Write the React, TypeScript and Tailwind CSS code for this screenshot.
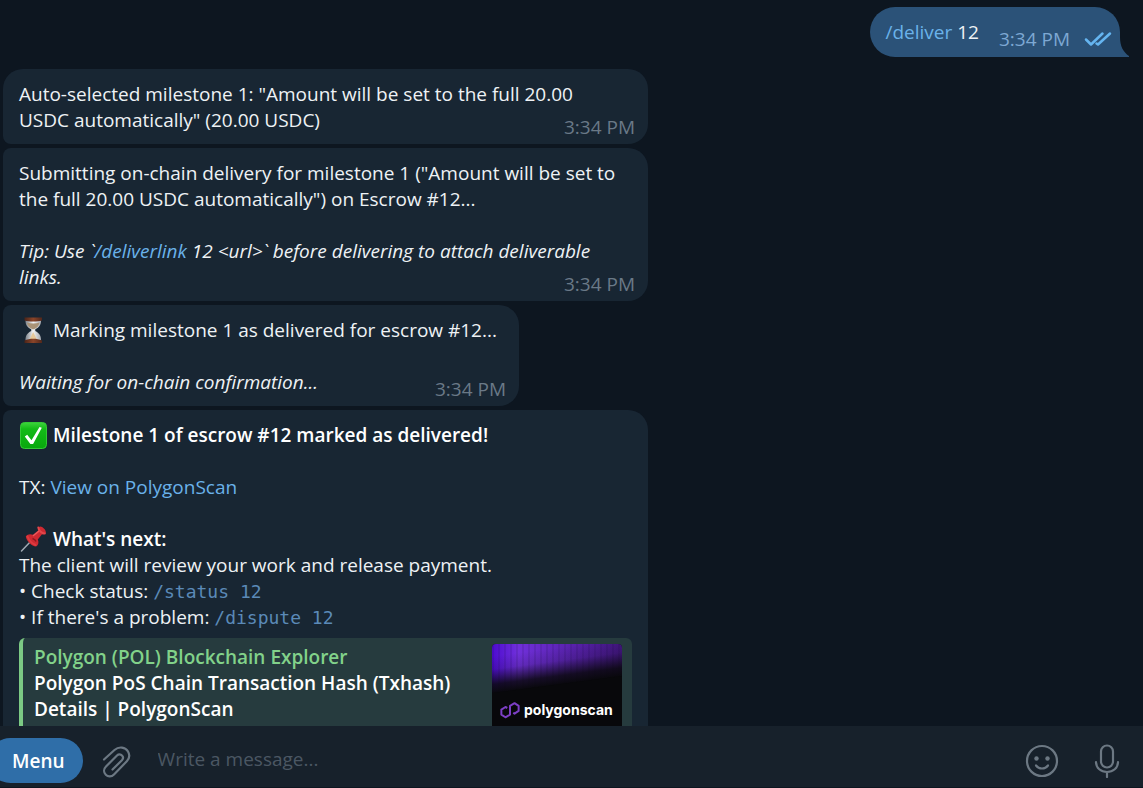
import React from "react";
import { clsx } from "clsx";

interface BubbleProps {
    children: React.ReactNode;
    time?: string;
    first?: boolean;
    wide?: boolean;
}

function Bubble({ children, time, first, wide }: BubbleProps) {
    return (
        <article
            className={clsx(
                "grid max-w-[645px] rounded-r-[20px] bg-[#182633]",
                wide ? "w-full" : "w-fit min-w-[516px]",
                first ? "rounded-tl-[20px] rounded-bl-lg" : "rounded-l-lg"
            )}
        >
            <div className="col-start-1 row-start-1 px-4 pt-3 pb-[11px]">{children}</div>
            {time && (
                <time className="col-start-1 row-start-1 mr-[13px] mb-1 self-end justify-self-end text-[#6a7987]">
                    {time}
                </time>
            )}
        </article>
    );
}

function CommandLink({ children }: { children: React.ReactNode }) {
    return (
        <a href="#" className="text-[#6ab2ea]">
            {children}
        </a>
    );
}

function Code({ children }: { children: React.ReactNode }) {
    return <code className="font-['DejaVu_Sans_Mono',monospace] text-lg/5 text-[#5b8ab8]">{children}</code>;
}

const emojiClass = "-mt-[6px] -mb-[2px] mr-px inline-block h-7 w-7 align-middle";

function Hourglass() {
    return (
        <svg viewBox="0 0 28 28" className={emojiClass} role="img" aria-label="Hourglass">
            <defs>
                <linearGradient id="wood" x1="0" x2="1">
                    <stop offset="0" stopColor="#4b2419" />
                    <stop offset=".5" stopColor="#8a4529" />
                    <stop offset="1" stopColor="#51271b" />
                </linearGradient>
                <linearGradient id="glass" x1="0" x2="1">
                    <stop offset="0" stopColor="#7d838b" />
                    <stop offset=".5" stopColor="#f2f3f4" />
                    <stop offset="1" stopColor="#a3a8af" />
                </linearGradient>
            </defs>
            <path d="M6.500 4h15.500c.2 5-1.700 7.200-5.700 9.300v1.700c4 2 6 5 5.700 9.500H6.500c-.3-4.500 1.700-7.500 5.700-9.500v-1.700C8.200 11.200 6.300 9 6.500 4z" fill="url(#glass)" />
            <path d="M8 6.500c4 1.300 8.500 1.300 12.500 0-.3 3-2.300 5.200-5.500 6.700h-1.500C10.300 11.700 8.300 9.500 8 6.500z" fill="#a99377" />
            <path d="M14.200 16l3.800 7.500h-7.500z" fill="#e7c99b" />
            <path d="M5.500 1.500h17.500v3c-5 1.300-12.500 1.300-17.500 0z" fill="url(#wood)" />
            <path d="M5.500 24.500c5-2.300 12.500-2.300 17.500 0V27H5.500z" fill="url(#wood)" />
        </svg>
    );
}

function CheckMark() {
    return (
        <svg viewBox="0 0 28 28" className={emojiClass} role="img" aria-label="Done">
            <defs>
                <linearGradient id="green" x1="0" y1="0" x2="0" y2="1">
                    <stop offset="0" stopColor="#3ed43c" />
                    <stop offset=".25" stopColor="#13bb17" />
                    <stop offset="1" stopColor="#08a80d" />
                </linearGradient>
            </defs>
            <rect x="1.500" y="1.500" width="26" height="26" rx="4" fill="url(#green)" stroke="#34c936" strokeWidth="1" />
            <path d="M5.800 15.600l2.400-1.800 4.300 5.400L20.500 6l2.300.8-8.700 16.200h-2.700z" fill="#fff" />
        </svg>
    );
}

function Pushpin() {
    return (
        <svg viewBox="0 0 28 28" className={emojiClass} role="img" aria-label="Pushpin">
            <path d="M2.500 26L12.500 15.500" stroke="#9fa9b3" strokeWidth="1.500" strokeLinecap="round" />
            <path d="M6.800 11.500c1.700-2.600 4.600-2.800 7.300-1.700l5-4.300c-.4-1.800.3-3.300 1.800-4 2.500-.3 5.800 3 6.100 6-.7 1.800-2.300 2.300-4 1.800l-4.200 5.200c1.200 2.700.8 5.600-1.700 7-4.500-.4-9.600-5.300-10.300-10z" fill="#cf2931" />
            <path d="M19.300 2.500c.2 2.800 3.300 6 6.500 6" fill="none" stroke="#e2474b" strokeWidth="2" strokeLinecap="round" />
            <path d="M14.500 10.500l5-4" stroke="#ea5a5c" strokeWidth="1.500" strokeLinecap="round" />
            <path d="M8.500 11.500c1.500 4 4.500 7 8 8.500" fill="none" stroke="#dd3b40" strokeWidth="2" strokeLinecap="round" />
            <path d="M13.500 13.500c1.500.5 3 1.500 3.500 3" fill="none" stroke="#8f1820" strokeWidth="1.500" />
        </svg>
    );
}

function PolygonScanCard() {
    return (
        <div className="h-[130px] w-[130px] shrink-0 overflow-hidden rounded bg-[#08080b]">
            <svg viewBox="0 0 130 56" className="block h-14 w-full" aria-hidden="true">
                <defs>
                    <linearGradient id="beam" x1="0" x2="1">
                        <stop offset="0" stopColor="#4d0bd0" />
                        <stop offset=".2" stopColor="#7030da" />
                        <stop offset=".55" stopColor="#5c24b4" />
                        <stop offset="1" stopColor="#421680" />
                    </linearGradient>
                    <linearGradient id="fade" x1="0" y1="0" x2="0" y2="1">
                        <stop offset="0" stopColor="#08080b" stopOpacity="0" />
                        <stop offset=".35" stopColor="#08080b" stopOpacity=".15" />
                        <stop offset=".75" stopColor="#08080b" stopOpacity=".85" />
                        <stop offset="1" stopColor="#08080b" />
                    </linearGradient>
                    <pattern id="ribs" width="6" height="56" patternUnits="userSpaceOnUse">
                        <rect width="2" height="56" fill="#1a0540" opacity=".12" />
                    </pattern>
                </defs>
                <rect width="130" height="56" fill="url(#beam)" />
                <rect width="130" height="56" fill="url(#ribs)" />
                <g transform="matrix(1 -.13 0 1 0 0)">
                    <rect y="12" width="130" height="38" fill="url(#fade)" />
                    <rect y="49" width="130" height="40" fill="#08080b" />
                </g>
            </svg>
            <div className="flex items-center gap-1 pl-2">
                <svg viewBox="0 0 22 20" className="h-5 w-5" fill="none" stroke="#7c3fc4" strokeWidth="2.200" strokeLinejoin="round" aria-hidden="true">
                    <path d="M14.500 13.200l1.500.8 4.500-3V5.500L16 2.500l-5 3V15l-5 3-4.500-3V9.500L6 6.700l2 1.100" />
                </svg>
                <span className="font-[Inter,sans-serif] text-sm/5 font-bold text-white">polygonscan</span>
            </div>
        </div>
    );
}

function LinkPreview() {
    return (
        <a href="#" className="mt-2 flex justify-between rounded-md border-l-4 border-[#7cca84] bg-[#263b3e] py-[6px] pr-[10px] pl-[11px] font-semibold">
            <span className="max-w-[430px]">
                <span className="block text-[#82d28a]">Polygon (POL) Blockchain Explorer</span>
                <span className="block text-white">Polygon PoS Chain Transaction Hash (Txhash) Details | PolygonScan</span>
            </span>
            <PolygonScanCard />
        </a>
    );
}

function OutgoingMessage() {
    return (
        <article className="mr-[14px] flex self-end">
            <div className="flex h-[50px] rounded-l-[25px] rounded-tr-[25px] bg-[#2b5278] pt-3 pr-2 pl-4">
                <p>
                    <CommandLink>/deliver</CommandLink> 12
                </p>
                <time className="mt-[7px] ml-5 text-[#7da8d3]">3:34 PM</time>
                <svg viewBox="0 0 28 18" className="mt-[11px] ml-[14px] h-[18px] w-7" fill="none" stroke="#65b5f0" strokeWidth="2.500" strokeLinecap="round" strokeLinejoin="round" role="img" aria-label="Read">
                    <path d="M2 9.500l5 5L18.500 3.500" />
                    <path d="M12.500 13.500l1.500 1L26 3.500" />
                </svg>
            </div>
            <svg viewBox="0 0 9 20" className="h-5 w-[9px] self-end" aria-hidden="true">
                <path d="M0 0c0 9 3 15 9 19v1H0z" fill="#2b5278" />
            </svg>
        </article>
    );
}

function Composer() {
    return (
        <footer className="flex h-[62px] shrink-0 items-center border-b border-[#0d1620] bg-[#17212b] pt-2">
            <button className="-ml-3 h-[45px] rounded-full bg-[#2f6ea8] pr-[18px] pl-6 font-semibold text-white">Menu</button>
            <button className="ml-[18px]" aria-label="Attach file">
                <svg viewBox="0 0 32 34" className="h-[34px] w-8" fill="none" stroke="#6c7883" strokeWidth="2.200" strokeLinecap="round">
                    <path d="M3 15.500L13.500 6C18 2 24.500 3 27 7.500c2 3.500 1.500 7-1.200 9.800L13 30.500c-2.500 2.500-6 2.500-8.200.3-2.400-2.400-2.300-5.800.2-8.300L16 11.500c1.500-1.500 3.700-1.500 5 0 1.400 1.500 1.300 3.300-.1 4.800L11.500 25.500" />
                </svg>
            </button>
            <input
                aria-label="Write a message"
                placeholder="Write a message..."
                className="mb-[3px] ml-[25px] min-w-0 flex-1 bg-transparent placeholder-[#4b5763] outline-none"
            />
            <button className="mr-[35px]" aria-label="Emoji">
                <svg viewBox="0 0 34 34" className="h-[34px] w-[34px]" fill="none" stroke="#6c7883" strokeWidth="2.200" strokeLinecap="round">
                    <circle cx="17" cy="17" r="15" />
                    <path d="M11 21.500c3 4 9 4 12 0" />
                    <circle cx="11.500" cy="14.500" r="2.200" fill="#6c7883" stroke="none" />
                    <circle cx="22.500" cy="14.500" r="2.200" fill="#6c7883" stroke="none" />
                </svg>
            </button>
            <button className="mr-[23px]" aria-label="Record voice message">
                <svg viewBox="0 0 26 34" className="h-[34px] w-[26px]" fill="none" stroke="#6c7883" strokeWidth="2.200" strokeLinecap="round">
                    <rect x="7" y="1.500" width="12" height="22" rx="6" />
                    <path d="M2 18c0 6 5 10 11 10s11-4 11-10M13 28v5" />
                </svg>
            </button>
        </footer>
    );
}

export default function App() {
    return (
        <div className="flex h-screen flex-col bg-[#0d1620] font-['Open_Sans',sans-serif] text-[19px]/[26px] text-[#eef2f5]">
            <main className="flex min-h-0 flex-1 flex-col gap-1 overflow-hidden pt-[7px] pl-[3px] [&>*]:shrink-0">
                <OutgoingMessage />
                <div className="mt-2 flex flex-col gap-1">
                    <Bubble first wide time="3:34 PM">
                        <p>
                            <span className="block">Auto-selected milestone 1: "Amount will be set to the full 20.00</span>
                            <span className="block">USDC automatically" (20.00 USDC)</span>
                        </p>
                    </Bubble>
                    <Bubble wide time="3:34 PM">
                        <p>
                            Submitting on-chain delivery for milestone 1 ("Amount will be set to the full 20.00 USDC
                            automatically") on Escrow #12...
                        </p>
                        <p className="mt-[26px] italic">
                            Tip: Use `<CommandLink>/deliverlink</CommandLink> 12 &lt;url&gt;` before delivering to attach
                            deliverable links.
                        </p>
                    </Bubble>
                    <Bubble time="3:34 PM">
                        <p>
                            <Hourglass /> Marking milestone 1 as delivered for escrow #12...
                        </p>
                        <p className="mt-[26px] italic">Waiting for on-chain confirmation...</p>
                    </Bubble>
                    <Bubble wide>
                        <p className="font-semibold text-white">
                            <CheckMark /> Milestone 1 of escrow #12 marked as delivered!
                        </p>
                        <p className="mt-[26px]">
                            TX: <CommandLink>View on PolygonScan</CommandLink>
                        </p>
                        <p className="mt-[26px] font-semibold text-white">
                            <Pushpin /> What's next:
                        </p>
                        <p>The client will review your work and release payment.</p>
                        <p>
                            • Check status: <Code>/status 12</Code>
                        </p>
                        <p>
                            • If there's a problem: <Code>/dispute 12</Code>
                        </p>
                        <LinkPreview />
                    </Bubble>
                </div>
            </main>
            <Composer />
        </div>
    );
}
